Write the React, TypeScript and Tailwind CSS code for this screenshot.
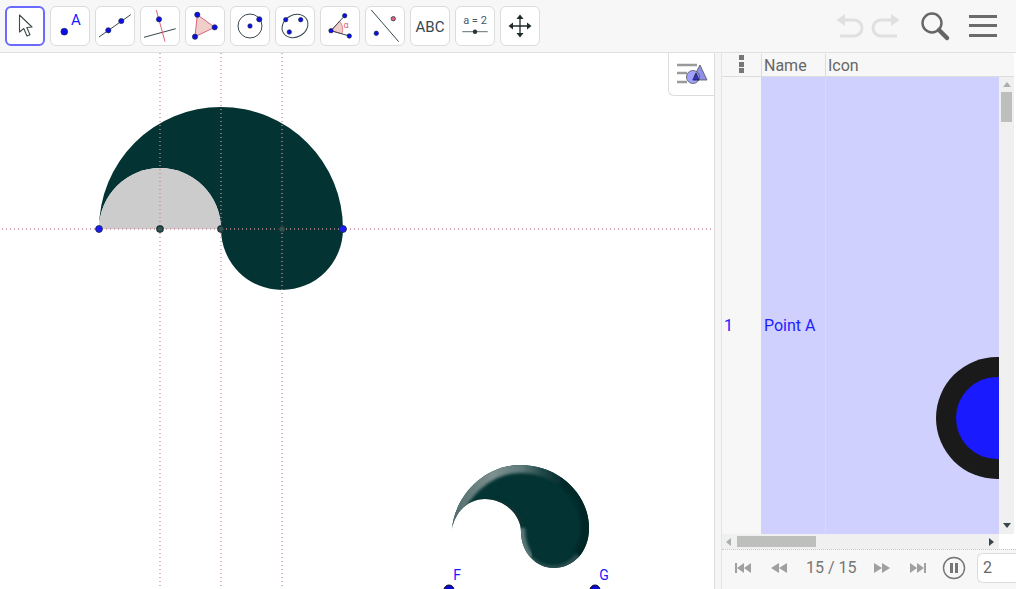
import React from "react";

const B = "#1a1aff";
const Pt = ({ x, y, r = 2.6, fill = "#0d0de8" }: { x: number; y: number; r?: number; fill?: string }) => (
  <circle cx={x} cy={y} r={r} fill={fill} stroke="#1c2f4a" strokeWidth={0.7} />
);

const icons: React.ReactNode[] = [
  <path d="M14.5 9 L14.5 26 L18.8 22.5 L22 30 L25 28.7 L21.8 21.5 L27 21 Z" fill="#fff" stroke="#3f4a4a" strokeWidth={1.1} strokeLinejoin="round" />,
  <>
    <Pt x={14.3} y={25.7} r={3.4} />
    <text x={26} y={19} textAnchor="middle" fontSize={15} fill="#1a1aff" fontFamily="Roboto, sans-serif">A</text>
  </>,
  <>
    <line x1={4} y1={31} x2={35.7} y2={8.7} stroke="#37474f" strokeWidth={1} />
    <Pt x={13.3} y={24.3} />
    <Pt x={26.3} y={15} />
  </>,
  <>
    <line x1={4} y1={31.3} x2={35.7} y2={22.7} stroke="#37474f" strokeWidth={1} />
    <line x1={16.3} y1={4} x2={25} y2={35.7} stroke="#d9647a" strokeWidth={1} />
    <Pt x={19} y={13.3} />
  </>,
  <>
    <polygon points="12.3,8.7 29.7,21.3 10,30.7" fill="#f0cfca" stroke="#d9647a" strokeWidth={1} />
    <Pt x={12.3} y={8.7} />
    <Pt x={29.7} y={21.3} />
    <Pt x={10} y={30.7} />
  </>,
  <>
    <circle cx={20} cy={20} r={12} fill="none" stroke="#37474f" strokeWidth={1} />
    <Pt x={20} y={20} r={2.2} />
    <Pt x={29.3} y={13.3} />
  </>,
  <>
    <ellipse cx={20} cy={20} rx={13.5} ry={11} transform="rotate(-30 20 20)" fill="none" stroke="#37474f" strokeWidth={1} />
    <Pt x={10.7} y={13.7} r={2.2} />
    <Pt x={25.7} y={13.7} r={2.2} />
    <Pt x={14.3} y={26} r={2.2} />
  </>,
  <>
    <path d="M11 24.7 L19.5 15.2 A13 13 0 0 1 22 27.8 Z" fill="#f0cfca" stroke="#d9647a" strokeWidth={0.8} />
    <line x1={11} y1={24.7} x2={24.7} y2={9.7} stroke="#37474f" strokeWidth={1} />
    <line x1={11} y1={24.7} x2={29.3} y2={30} stroke="#37474f" strokeWidth={1} />
    <text x={26} y={22} textAnchor="middle" fontSize={9} fill="#d9647a" fontFamily="Roboto, sans-serif">α</text>
    <Pt x={11} y={24.7} r={2.2} />
    <Pt x={24.7} y={9.7} r={2.2} />
    <Pt x={29.3} y={30} r={2.2} />
  </>,
  <>
    <line x1={6.3} y1={4} x2={33.7} y2={35.7} stroke="#37474f" strokeWidth={1} />
    <Pt x={28.3} y={12.7} r={2.2} fill="#d9647a" />
    <Pt x={11.3} y={27.3} r={2.2} />
  </>,
  <text x={20} y={25.5} textAnchor="middle" fontSize={15} fill="#37474f" fontFamily="Roboto, sans-serif">ABC</text>,
  <>
    <text x={20} y={18} textAnchor="middle" fontSize={11} fill="#455a64" fontFamily="Roboto, sans-serif">a = 2</text>
    <line x1={7.3} y1={25.7} x2={32.7} y2={25.7} stroke="#607070" strokeWidth={1} />
    <circle cx={20} cy={25.7} r={2.2} fill="#263238" />
  </>,
  <>
    <path d="M20 10 V30 M10 20 H30" stroke="#1f2a2a" strokeWidth={1.3} />
    <path d="M20 8.5 L23.5 13 H16.5 Z M20 31.5 L23.5 27 H16.5 Z M8.5 20 L13 16.5 V23.5 Z M31.5 20 L27 16.5 V23.5 Z" fill="#1f2a2a" />
  </>,
];

const shape =
  "M452 529 C455 495 485 465 520 465 C560 465 589 495 589 528 C589 553 572 568 554 568 C536 568 521 552 521 532 C521 515 505 499 485 499 C468 499 455 512 452 529 Z";

export default function App() {
  return (
    <div className="flex h-[589px] w-[1016px] flex-col overflow-hidden bg-white font-['Roboto',sans-serif]">
      <header className="flex h-[53px] shrink-0 items-center border-b border-[#e0e0e0] bg-[#f7f7f7] pb-px">
        <div className="flex gap-[5px] pl-[5px]">
          {icons.map((icon, i) => (
            <div
              key={i}
              className={
                i === 0
                  ? "h-10 w-10 rounded-md border-2 border-[#6a6aff] bg-white"
                  : "h-10 w-10 rounded-md border border-[#dcdcdc] bg-white"
              }
            >
              <svg viewBox={i === 0 ? "2 2 36 36" : "1 1 38 38"} className="h-full w-full">
                {icon}
              </svg>
            </div>
          ))}
        </div>
        <div className="ml-auto flex items-center pr-[19px]">
          <svg width="64" height="26" viewBox="0 0 64 26" className="mr-[19px]" fill="none" stroke="#e0e0e0" strokeWidth="3">
            <path d="M3 7 H18 A7 7 0 0 1 18 23 H4" />
            <path d="M0.5 7 L9 1 V13 Z" fill="#e0e0e0" stroke="none" />
            <path d="M63 7 H46 A7 7 0 0 0 46 23 H62" transform="translate(-1 0)" />
            <path d="M63.5 7 L55 1 V13 Z" fill="#e0e0e0" stroke="none" />
          </svg>
          <svg width="32" height="32" viewBox="0 0 32 32" className="mr-[18px]">
            <circle cx="13" cy="13" r="9.5" fill="none" stroke="#666" strokeWidth="2.4" />
            <path d="M20 20 L28 28" stroke="#666" strokeWidth="4.5" strokeLinecap="round" />
          </svg>
          <div className="flex w-[28px] flex-col gap-[6.5px]">
            <div className="h-[3px] bg-[#6b6b6b]" />
            <div className="h-[3px] bg-[#6b6b6b]" />
            <div className="h-[3px] bg-[#6b6b6b]" />
          </div>
        </div>
      </header>

      <div className="flex h-[536px] shrink-0">
        <main className="relative h-full w-[715px] shrink-0 border-r border-[#dcdcdc]">
          <svg viewBox="0 53 714 536" className="block h-full w-full">
            <defs>
              <clipPath id="tear">
                <path d={shape} />
              </clipPath>
              <filter id="soft" x="-20%" y="-20%" width="140%" height="140%">
                <feGaussianBlur stdDeviation="1.5" />
              </filter>
              <linearGradient id="rim" gradientUnits="userSpaceOnUse" x1="452" y1="500" x2="590" y2="500">
                <stop offset="0" stopColor="#4f6b6b" />
                <stop offset="0.3" stopColor="#7f9090" />
                <stop offset="0.5" stopColor="#5f7a7a" />
                <stop offset="0.66" stopColor="#1f4646" />
                <stop offset="0.8" stopColor="#022c2c" />
                <stop offset="1" stopColor="#012626" />
              </linearGradient>
            </defs>
            <path d="M99 229 A122 122 0 0 1 343 229 A61 61 0 0 1 221 229 A61 61 0 0 0 99 229 Z" fill="#033333" />
            <path d="M99 229 A61 61 0 0 1 221 229 Z" fill="#cccccc" />
            <g stroke="#c58a96" strokeWidth={1.3} strokeDasharray="1 3">
              <line x1={160} y1={53} x2={160} y2={589} />
              <line x1={221} y1={53} x2={221} y2={589} />
              <line x1={282} y1={53} x2={282} y2={589} />
              <line x1={2} y1={229} x2={714} y2={229} />
            </g>
            <circle cx={160} cy={229} r={3.2} fill="#2d5555" stroke="#1a2c2c" strokeWidth={1.2} />
            <circle cx={221} cy={229} r={3.2} fill="#2d5555" stroke="#1a2c2c" strokeWidth={1.2} />
            <circle cx={282} cy={229} r={3.2} fill="#2d5555" stroke="#1a2c2c" strokeWidth={1.2} />
            <circle cx={99} cy={229} r={3.4} fill={B} stroke="#1d2a4a" strokeWidth={0.9} />
            <circle cx={343} cy={229} r={3.4} fill={B} stroke="#1d2a4a" strokeWidth={0.9} />

            <path d={shape} fill="#033333" />
            <g clipPath="url(#tear)">
              <path d="M452 529 C455 495 485 465 520 465 C560 465 589 495 589 528 C589 540 585 550 578 556" fill="none" stroke="url(#rim)" strokeWidth="16" filter="url(#soft)" />
              <path d="M578 556 C572 563 563 568 554 568 C540 568 530 560 525 550" fill="none" stroke="#2d5050" strokeWidth="5" filter="url(#soft)" />
              <path d="M530 558 C524 550 521 542 521 528" fill="none" stroke="#587777" strokeWidth="8" filter="url(#soft)" />
              <path d="M470 505 C500 493 518 510 522 525" fill="none" stroke="#0a3030" strokeWidth="5" filter="url(#soft)" />
            </g>
            <text x={457} y={580} textAnchor="middle" fontSize={14} fill={B}>F</text>
            <text x={604} y={580} textAnchor="middle" fontSize={14} fill={B}>G</text>
            <circle cx={449} cy={590} r={5} fill="#0a0ad0" stroke="#111" />
            <circle cx={595} cy={590} r={5} fill="#0a0ad0" stroke="#111" />
          </svg>
          <button className="absolute right-0 top-0 h-[43px] w-[46px] rounded-bl-md border-b border-l border-[#dcdcdc] bg-white">
            <svg viewBox="669 53 45 42" className="block h-full w-full">
              <path d="M677 65 H697 M677 73 H687 M677 82 H687" stroke="#9a9a9a" strokeWidth="2.4" />
              <path d="M700 65 L707 80 H692 Z" fill="#8f8fe8" stroke="#555" strokeWidth="0.8" />
              <circle cx="693" cy="77" r="6.5" fill="#9090ff" fillOpacity="0.85" stroke="#555" strokeWidth="0.8" />
              <path d="M693 80 H699 L696 73 Z" fill="#3333cc" stroke="#223" strokeWidth="0.8" />
            </svg>
          </button>
        </main>

        <div className="w-[6px] shrink-0 bg-[#f5f5f5]" />

        <section className="flex w-[295px] shrink-0 flex-col border-l border-[#e4e4e4] text-[16px] text-[#666]">
          <div className="mr-[2px] flex h-[24px] shrink-0 border-b border-[#dcdcdc] bg-[#f7f7f7] pt-px leading-[24px]">
            <div className="flex w-[39px] shrink-0 flex-col items-center gap-[1.5px] pt-[1px]">
              <div className="h-[5px] w-[5px] bg-[#777]" />
              <div className="h-[5px] w-[5px] bg-[#777]" />
              <div className="h-[5px] w-[5px] bg-[#777]" />
            </div>
            <div className="w-[64px] shrink-0 border-l border-[#dcdcdc] pl-[2px]">Name</div>
            <div className="flex-1 border-l border-[#dcdcdc] pl-[2px]">Icon</div>
          </div>

          <div className="mr-[2px] flex h-[457px] shrink-0">
            <div className="flex w-[39px] shrink-0 items-center bg-[#f7f7f7] pl-[2px] pt-[41px] text-[#2020ff]">1</div>
            <div className="flex w-[64px] shrink-0 items-center bg-[#d0d0ff] pl-[3px] pt-[41px] text-[#2020ff]">Point A</div>
            <div className="flex-1 overflow-hidden border-l border-[#dcdcdc] bg-[#d0d0ff]">
              <svg viewBox="826 77 173 457" className="block h-full w-full">
                <circle cx={997} cy={418} r={61} fill="#1a1a1a" />
                <circle cx={997} cy={418} r={41} fill="#1a1aff" />
              </svg>
            </div>
            <div className="flex w-[15px] shrink-0 flex-col items-center bg-[#f0f0f0]">
              <div className="mt-[5px] h-0 w-0 border-x-[4px] border-b-[5px] border-x-transparent border-b-[#a8b0b0]" />
              <div className="mt-[5px] h-[30px] w-[11px] bg-[#bdbfbd]" />
              <div className="mb-[6px] mt-auto h-0 w-0 border-x-[4px] border-t-[5px] border-x-transparent border-t-[#37474f]" />
            </div>
          </div>

          <div className="flex h-[15px] shrink-0 items-center">
            <div className="flex h-full w-[277px] items-center bg-[#f0f0f0]">
              <div className="ml-[4px] h-0 w-0 border-y-[4px] border-r-[5px] border-y-transparent border-r-[#a8b0b0]" />
              <div className="ml-[6px] h-[11px] w-[79px] bg-[#bdbfbd]" />
              <div className="ml-auto mr-[5px] h-0 w-0 border-y-[4px] border-l-[5px] border-y-transparent border-l-[#37474f]" />
            </div>
          </div>

          <div className="flex h-[40px] shrink-0 items-start border-t border-dotted border-[#c8c8c8] bg-[#f7f7f7] pl-[13px] pt-[3px]">
            <div className="flex h-[30px] flex-1 items-center">
              <svg width="16" height="10" viewBox="0 0 16 10" className="shrink-0">
                <path d="M0 0 H2 V10 H0 Z M9 0 V10 L2 5 Z M16 0 V10 L9 5 Z" fill="#a0a0a0" />
              </svg>
              <svg width="16" height="10" viewBox="0 0 16 10" className="ml-[20px] shrink-0">
                <path d="M0 5 L8 0 V10 Z M8 5 L16 0 V10 Z" fill="#a0a0a0" />
              </svg>
              <span className="ml-[19px] w-[50px] shrink-0 whitespace-nowrap text-[16px] text-[#757575]">15 / 15</span>
              <svg width="16" height="10" viewBox="0 0 16 10" className="ml-[18px] shrink-0">
                <path d="M16 5 L8 0 V10 Z M8 5 L0 0 V10 Z" fill="#a0a0a0" />
              </svg>
              <svg width="16" height="10" viewBox="0 0 16 10" className="ml-[20px] shrink-0">
                <path d="M16 0 H14 V10 H16 Z M7 0 V10 L14 5 Z M0 0 V10 L7 5 Z" fill="#a0a0a0" />
              </svg>
              <svg width="24" height="24" viewBox="0 0 24 24" className="ml-[16px] shrink-0">
                <circle cx="12" cy="12" r="10.5" fill="none" stroke="#757575" strokeWidth="1.4" />
                <path d="M8 7 H11 V17 H8 Z M13 7 H16 V17 H13 Z" fill="#757575" />
              </svg>
              <div className="ml-[11px] flex h-[30px] flex-1 items-center rounded-l-md border border-r-0 border-[#dcdcdc] bg-white pl-[5px] text-[#666]">2</div>
            </div>
          </div>
        </section>
      </div>
    </div>
  );
}
